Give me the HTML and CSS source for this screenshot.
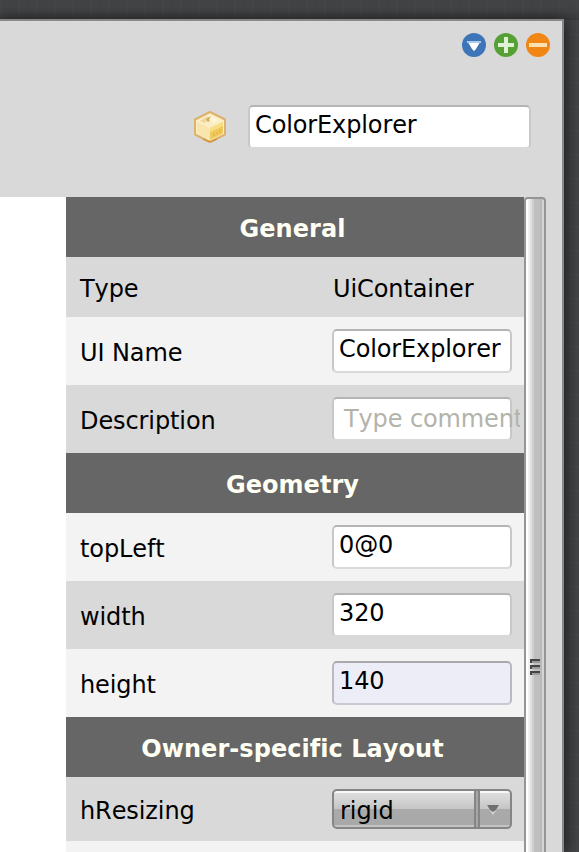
FILE: index.html
```html
<!DOCTYPE html>
<html lang="en">
<head>
<meta charset="utf-8">
<title>ColorExplorer</title>
<link rel="stylesheet" href="styles.css">
</head>
<body>
<main class="window">
  <div class="controls">
    <svg width="24" height="24" viewBox="0 0 24 24"><circle cx="12" cy="12" r="12" fill="#3d75b8"/><path d="M5 8H19V10H17L12 18L7 10H5Z" fill="#a9cbed"/><path d="M6.5 10H17.5L14 16L12 18L10 16Z" fill="#fff"/></svg>
    <svg width="24" height="24" viewBox="0 0 24 24"><circle cx="12" cy="12" r="12" fill="#57a033"/><path d="M10 4H14V10H20V14H14V20H10V14H4V10H10Z" fill="#e0f1d7"/></svg>
    <svg width="24" height="24" viewBox="0 0 24 24"><circle cx="12" cy="12" r="12" fill="#f08614"/><path d="M3 10H21V14H3Z" fill="#fbe0b0"/></svg>
  </div>
  <div class="title">
    <svg class="box" width="32" height="32" viewBox="0 0 32 32">
      <path d="M16 1L31 8.5V23.5L16 31L1 23.5V8.5Z" fill="#fdefc4" stroke="#ddb26e" stroke-width="2" stroke-linejoin="round"/>
      <path d="M3 11L16 17V29L3 22.5Z" fill="#f9e6ae"/>
      <path d="M16 17L29 11V22.5L16 29Z" fill="#f0cb5c"/>
      <path d="M3 10L16 3.5L29 10L16 16.5Z" fill="#fbedc4"/>
      <path d="M6 9.5L14 5.5L17 8.5L10 12Z" fill="#f0d79d"/>
      <path d="M12 8L18 4.5V8.5L14 11Z" fill="#d3ac60"/>
      <path d="M17 4.5L25 9L19 12L15 9Z" fill="#fff4d4"/>
      <path d="M16 17L29 11V15L16 21Z" fill="#f8de85"/>
      <path d="M20 25V22M23 23.5V20.5M26 22V18" stroke="#e3b14c" stroke-width="1.3"/>
      <path d="M9 28L16 31L23 28" fill="none" stroke="#d39640" stroke-width="1.5"/>
    </svg>
    <div class="field name">ColorExplorer</div>
  </div>
  <div class="content">
    <div class="canvas"></div>
    <section class="inspector">
      <h2>General</h2>
      <div class="row short dark"><span>Type</span><span class="value">UiContainer</span></div>
      <div class="row"><span>UI Name</span><div class="field">ColorExplorer</div></div>
      <div class="row dark"><span>Description</span><div class="field hint">Type comment</div></div>
      <h2>Geometry</h2>
      <div class="row"><span>topLeft</span><div class="field">0@0</div></div>
      <div class="row dark"><span>width</span><div class="field">320</div></div>
      <div class="row"><span>height</span><div class="field focus">140</div></div>
      <h2>Owner-specific Layout</h2>
      <div class="row select-row dark"><span>hResizing</span>
        <div class="select"><span>rigid</span><div class="drop"><svg width="14" height="10" viewBox="0 0 14 10"><path d="M0 0H14L7 10Z" fill="#d5d5d5"/><path d="M1 0H13L10 5L7 7L4 5Z" fill="#707070"/></svg></div></div>
      </div>
      <div class="row"></div>
    </section>
    <div class="scrollbar"><i></i><i></i><i></i></div>
  </div>
</main>
</body>
</html>
```
FILE: styles.css
```css
* { box-sizing: border-box; }
html { height: 100%; overflow: hidden; }
body {
  margin: 0;
  height: 852px;
  overflow: hidden;
  padding: 19px 15px 0 0;
  font: 24px/28px "DejaVu Sans", sans-serif;
  font-kerning: none;
  color: #000;
  background:
    linear-gradient(to bottom, transparent 6px, rgba(0,0,0,.15) 20px, transparent 20px),
    repeating-linear-gradient(90deg, rgba(255,255,255,.012) 0 2px, transparent 2px 9px, rgba(0,0,0,.02) 9px 11px, transparent 11px 18px),
    repeating-linear-gradient(0deg, rgba(255,255,255,.012) 0 2px, transparent 2px 14px, rgba(0,0,0,.02) 14px 16px, transparent 16px 24px),
    #434446;
}
.window {
  height: 833px;
  display: flex;
  flex-direction: column;
  background: #d9d9d9;
  border: solid #888;
  border-width: 2px 2px 0 0;
  box-shadow: 2px 2px 14px rgba(0,0,0,.6);
}
.controls {
  display: flex;
  justify-content: flex-end;
  gap: 8px;
  padding: 12px 12px 0 0;
}
.title {
  display: flex;
  justify-content: flex-end;
  gap: 22px;
  height: 140px;
  padding: 48px 31px 0 0;
}
.controls svg, .title svg, .drop svg { display: block; flex: none; }
.box { margin-top: 6px; }
.field {
  width: 180px;
  height: 44px;
  padding: 4px 0 0 5px;
  letter-spacing: -.12px;
  white-space: nowrap;
  border: 2px solid;
  border-color: #b4b4b4 #c8c8c8 #d9d9d9;
  border-radius: 5px;
  background: #fff;
}
.name { width: 283px; }
.hint {
  color: #b3b3ab;
  padding: 6px 0 0 10px;
  overflow: clip;
  overflow-clip-margin: 10px;
}
.focus { background: #ededf7; border-color: #a9a9ad #b9b9c0 #c9c9d2; }
.content { display: flex; flex: 1; min-height: 0; }
.canvas { width: 66px; background: #fff; }
.inspector { width: 458px; overflow: hidden; }
h2 {
  margin: 0;
  height: 60px;
  padding: 18px 5px 0 0;
  text-align: center;
  font-size: 24px;
  line-height: 28px;
  letter-spacing: .05px;
  color: #fffff4;
  background: #666;
}
.row {
  display: grid;
  grid-template-columns: 252px 180px;
  height: 68px;
  padding: 12px 0 0 14px;
  background: #f3f3f3;
}
.row > span { padding-top: 10px; letter-spacing: -.1px; }
.dark { background: #d9d9d9; }
.short { height: 60px; }
.short > span { padding-top: 6px; }
.row > .value { padding-left: 1px; }
.select-row { height: 64px; }
.select-row > span { padding-top: 8px; }
.select {
  display: flex;
  height: 40px;
  border: 2px solid #858585;
  border-radius: 5px;
  background: linear-gradient(#f8f8f8 0 2px, #dedede 2px, #c5c5c5 50%, #aaa 50%, #a8a8a8 34px, #c4c4c4 34px);
}
.select > span { flex: 1; padding: 6px 0 0 6px; }
.drop {
  width: 36px;
  padding: 14px 0 0 12px;
  background: linear-gradient(90deg, #858585 0 2px, #a6a6a6 2px 4px, #858585 4px 6px, transparent 6px);
}
.scrollbar {
  width: 22px;
  padding: 460px 0 0 4px;
  border: 2px solid #959595;
  border-bottom: 0;
  border-radius: 4px 4px 0 0;
  background: linear-gradient(90deg, #fff 0 2px, #f1f1f1 2px 4px, #e0e0e0 4px 6px, #cecece 6px 8px, #bfbfbf 8px 14px, #b9b9b9 14px 16px, #d4d4d4 16px);
}
.scrollbar i {
  display: block;
  width: 10px;
  height: 4px;
  margin-bottom: 2px;
  background: linear-gradient(90deg, #444 2px, transparent 2px), linear-gradient(#444 2px, #999 2px);
}
```
